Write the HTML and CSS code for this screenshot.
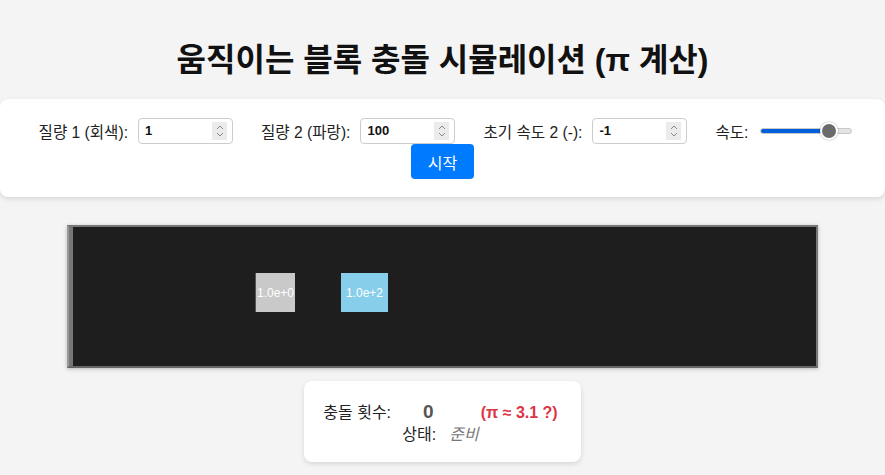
FILE: index.html
```html
<!DOCTYPE html>
<html lang="ko">
<head>
<meta charset="utf-8">
<title>움직이는 블록 충돌 시뮬레이션</title>
<link rel="stylesheet" href="styles.css">
</head>
<body>
<h1 class="title">움직이는 블록 충돌 시뮬레이션 (π 계산)</h1>
<div class="controls">
  <div class="group"><label>질량 1 (회색):</label><span class="num-wrap"><input class="num" type="number" value="1"><span class="spin"><svg width="10" height="14" viewBox="0 0 10 14"><path d="M2 5 L5 2 L8 5 M2 9 L5 12 L8 9" fill="none" stroke="#888" stroke-width="1"/></svg></span></span></div>
  <div class="group"><label>질량 2 (파랑):</label><span class="num-wrap"><input class="num" type="number" value="100"><span class="spin"><svg width="10" height="14" viewBox="0 0 10 14"><path d="M2 5 L5 2 L8 5 M2 9 L5 12 L8 9" fill="none" stroke="#888" stroke-width="1"/></svg></span></span></div>
  <div class="group"><label>초기 속도 2 (-):</label><span class="num-wrap"><input class="num" type="number" value="-1"><span class="spin"><svg width="10" height="14" viewBox="0 0 10 14"><path d="M2 5 L5 2 L8 5 M2 9 L5 12 L8 9" fill="none" stroke="#888" stroke-width="1"/></svg></span></span></div>
  <div class="group"><label>속도:</label><input class="slider" type="range" min="0" max="100" value="82"></div>
  <button class="start">시작</button>
</div>
<div class="stage">
  <div class="canvas">
    <div class="wall"></div>
    <div class="block block-gray" style="left:186px;width:40px;">1.0e+0</div>
    <div class="block block-blue" style="left:272px;width:47px;">1.0e+2</div>
  </div>
</div>
<div class="stats">
  <div class="stat-row">
    <span class="stat-label">충돌 횟수:</span>
    <span class="count">0</span>
    <span class="pi">(π ≈ 3.1 ?)</span>
  </div>
  <div class="stat-row">
    <span class="stat-label">상태:</span>
    <span class="status">준비</span>
  </div>
</div>
</body>
</html>
```

FILE: styles.css
```css
html, body {
  margin: 0;
  padding: 0;
}
body {
  background: #f4f4f4;
  font-family: "Liberation Sans", "Noto Sans CJK KR", sans-serif;
  color: #222;
  height: 475px;
  overflow: hidden;
}
.title {
  margin: 0;
  padding-top: 41px;
  height: 58px;
  box-sizing: content-box;
  text-align: center;
  font-size: 32px;
  font-weight: bold;
  line-height: 38px;
  color: #111;
}
.controls {
  background: #fff;
  border-radius: 8px;
  box-shadow: 0 2px 5px rgba(0,0,0,0.12);
  padding: 18px 18px 18px 24px;
  display: flex;
  flex-wrap: wrap;
  justify-content: center;
  column-gap: 28px;
  row-gap: 0;
  height: 62px;
}
.group {
  display: flex;
  align-items: center;
  gap: 10px;
  font-size: 15.6px;
  height: 27px;
}
.num-wrap {
  position: relative;
  display: inline-block;
  width: 95px;
  height: 26px;
}
.num {
  width: 95px;
  height: 26px;
  box-sizing: border-box;
  border: 1px solid #ccc;
  border-radius: 4px;
  padding: 2px 4px 2px 6px;
  font-family: "Liberation Sans", sans-serif;
  font-size: 13px;
  font-weight: bold;
  color: #111;
  background: #fff;
  display: block;
}
.num::-webkit-inner-spin-button,
.num::-webkit-outer-spin-button {
  -webkit-appearance: none;
  margin: 0;
}
.spin {
  position: absolute;
  right: 6px;
  top: 4px;
  width: 15px;
  height: 18px;
  background: #ebebeb;
  display: flex;
  align-items: center;
  justify-content: center;
}
.slider {
  -webkit-appearance: none;
  appearance: none;
  width: 92px;
  height: 20px;
  margin: 0 0 0 2px;
  background: transparent;
}
.slider::-webkit-slider-runnable-track {
  height: 6px;
  border-radius: 3px;
  background: linear-gradient(to right, #005fdb 0%, #005fdb 80%, #e4e4e4 80%, #e4e4e4 100%);
  border: 1px solid #c8c8c8;
  box-sizing: border-box;
}
.slider::-webkit-slider-thumb {
  -webkit-appearance: none;
  appearance: none;
  width: 18px;
  height: 18px;
  border-radius: 50%;
  background: #6b6b6b;
  border: 2px solid #fff;
  box-shadow: 0 0 2px rgba(0,0,0,0.35);
  margin-top: -7px;
}
.start {
  background: #007bff;
  color: #fff;
  border: none;
  border-radius: 4px;
  width: 63px;
  height: 35px;
  margin-right: 6px;
  font-family: "Liberation Sans", "Noto Sans CJK KR", sans-serif;
  font-size: 16px;
  padding: 0;
}
.stage {
  display: flex;
  justify-content: center;
  margin-top: 28px;
}
.canvas {
  position: relative;
  width: 747px;
  height: 139px;
  background: #1e1e1e;
  border: 2px solid #777;
  border-left-color: #999;
  border-bottom-color: #666;
  box-shadow: 0 1px 4px rgba(0,0,0,0.25);
  overflow: hidden;
}
.wall {
  position: absolute;
  left: 0;
  top: 0;
  width: 4px;
  height: 100%;
  background: #777;
}
.block {
  position: absolute;
  top: 46px;
  height: 39px;
  display: flex;
  align-items: center;
  justify-content: center;
  color: #fff;
  font-family: "Liberation Sans", sans-serif;
  font-size: 12px;
}
.block-gray {
  background: #c9c9c9;
  border-left: 1px solid #555;
  box-sizing: border-box;
}
.block-blue {
  background: #87ceeb;
}
.stats {
  width: 277px;
  margin: 13px auto 0;
  box-sizing: border-box;
  background: #fff;
  border-radius: 8px;
  box-shadow: 0 2px 5px rgba(0,0,0,0.12);
  padding: 20px 14px 16px 10px;
  height: 81px;
  font-size: 16px;
}
.stat-row {
  display: flex;
  justify-content: center;
  align-items: baseline;
  line-height: 22px;
}
.stat-label {
  color: #222;
}
.count {
  font-size: 19px;
  font-weight: bold;
  color: #555;
  margin-left: 32px;
}
.pi {
  font-size: 16px;
  font-weight: bold;
  color: #dc3545;
  margin-left: 47px;
}
.status {
  font-style: italic;
  color: #777;
  margin-left: 13px;
}
```
